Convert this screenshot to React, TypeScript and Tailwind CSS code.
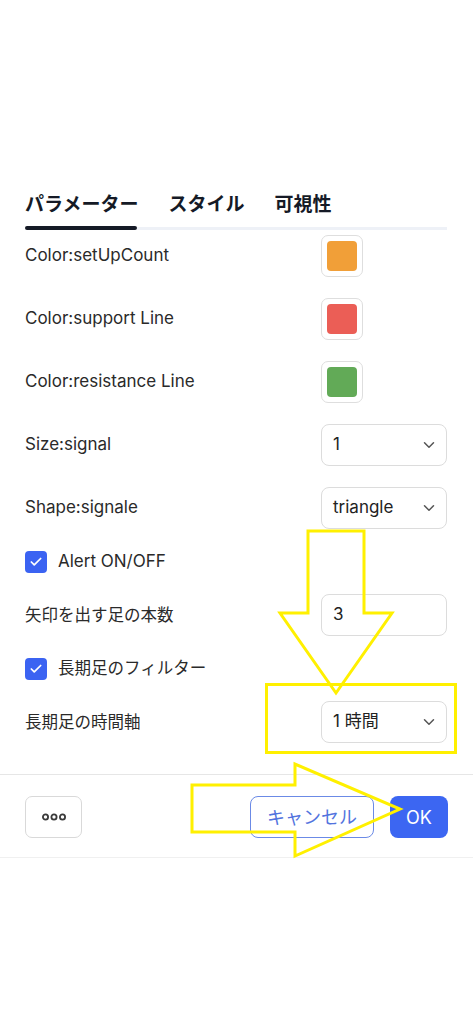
import { ChevronDown, Check } from "lucide-react";

const FONT = { fontFamily: '"Inter", "Noto Sans CJK JP", sans-serif' };

function Swatch({ color }: { color: string }) {
  return (
    <div className="flex h-[42px] w-[42px] items-center justify-center rounded-[7px] border border-[#dedede] bg-white">
      <div className={`h-[30px] w-[30px] rounded-[4px] ${color}`} />
    </div>
  );
}

function SelectBox({ value }: { value: string }) {
  return (
    <div className="flex h-[42px] w-[126px] items-center justify-between rounded-[8px] border border-[#dcdcdc] bg-white pl-[11px] pr-[8px] text-[17px] text-[#222]">
      <span>{value}</span>
      <ChevronDown size={18} strokeWidth={2} className="text-[#555]" />
    </div>
  );
}

function InputBox({ value }: { value: string }) {
  return (
    <div className="flex h-[42px] w-[126px] items-center rounded-[8px] border border-[#dcdcdc] bg-white pl-[11px] text-[17px] text-[#222]">
      {value}
    </div>
  );
}

function Row({ label, jp, children }: { label: string; jp?: boolean; children: React.ReactNode }) {
  return (
    <div className="flex h-[42px] items-center justify-between">
      <span className={jp ? "text-[16.5px] text-[#2a2a2a]" : "text-[17px] text-[#2a2a2a]"}>{label}</span>
      <div className="flex w-[126px] justify-start">{children}</div>
    </div>
  );
}

function CheckRow({ label, jp }: { label: string; jp?: boolean }) {
  return (
    <div className="flex h-[23px] items-center gap-[11px]">
      <div className="flex h-[22px] w-[22px] items-center justify-center rounded-[4px] bg-[#3b63f2]">
        <Check size={14} strokeWidth={3} className="text-white" />
      </div>
      <span className={jp ? "text-[16.5px] text-[#2a2a2a]" : "text-[17px] text-[#2a2a2a]"}>{label}</span>
    </div>
  );
}

export default function App() {
  return (
    <div className="relative min-h-screen bg-white" style={FONT}>
      <div className="px-[25px] pr-[26px] pt-[193px]">
        <div className="flex h-6 items-center gap-[30px] text-[19px] font-bold text-[#151a26]">
          <span>パラメーター</span>
          <span>スタイル</span>
          <span>可視性</span>
        </div>
        <div className="mt-[9px] flex items-center">
          <div className="h-[4px] w-[112px] rounded-full bg-[#151a26]" />
          <div className="h-[3px] flex-1 bg-[#eef1f7]" />
        </div>

        <div className="mt-[5px] flex flex-col gap-[21px]">
          <Row label="Color:setUpCount">
            <Swatch color="bg-[#f19f38]" />
          </Row>
          <Row label="Color:support Line">
            <Swatch color="bg-[#eb5e56]" />
          </Row>
          <Row label="Color:resistance Line">
            <Swatch color="bg-[#62aa57]" />
          </Row>
          <Row label="Size:signal">
            <SelectBox value="1" />
          </Row>
          <Row label="Shape:signale">
            <SelectBox value="triangle" />
          </Row>
          <CheckRow label="Alert ON/OFF" />
          <Row label="矢印を出す足の本数" jp>
            <InputBox value="3" />
          </Row>
          <CheckRow label="長期足のフィルター" jp />
          <Row label="長期足の時間軸" jp>
            <SelectBox value="1 時間" />
          </Row>
        </div>
      </div>

      <div className="mt-[31px] border-t border-[#e6e6e6]" />
      <div className="flex items-center justify-between border-b border-[#f0f0f0] px-[25px] pr-[25px] pb-[19px] pt-[21px]">
        <button className="flex h-[42px] w-[57px] items-center justify-center rounded-[7px] border border-[#d9d9d9] bg-white">
          <svg width="24" height="8" viewBox="0 0 24 8" fill="none" stroke="#3a3a3a" strokeWidth="1.8">
            <circle cx="3.5" cy="4" r="2.6" />
            <circle cx="12" cy="4" r="2.6" />
            <circle cx="20.5" cy="4" r="2.6" />
          </svg>
        </button>
        <div className="flex items-center gap-[16px]">
          <button className="flex h-[42px] w-[124px] items-center justify-center rounded-[8px] border border-[#6b8ae6] bg-white text-[18px] text-[#5273de]">
            キャンセル
          </button>
          <button className="flex h-[42px] w-[58px] items-center justify-center rounded-[8px] bg-[#3c66f2] text-[18px] text-white">
            OK
          </button>
        </div>
      </div>

      {/* yellow annotation marks drawn over the screenshot */}
      <svg
        className="pointer-events-none absolute left-0 top-0"
        width="473"
        height="1024"
        viewBox="0 0 473 1024"
        fill="none"
        stroke="#fff000"
        strokeWidth="3"
        strokeLinejoin="miter"
      >
        <polygon points="308,531 364,531 364,613 392,613 336,693 280,613 308,613" />
        <rect x="266.5" y="684.5" width="189" height="68" />
        <polygon points="192,785 295,785 295,764 400,809 295,856 295,832 192,832" />
      </svg>
    </div>
  );
}
